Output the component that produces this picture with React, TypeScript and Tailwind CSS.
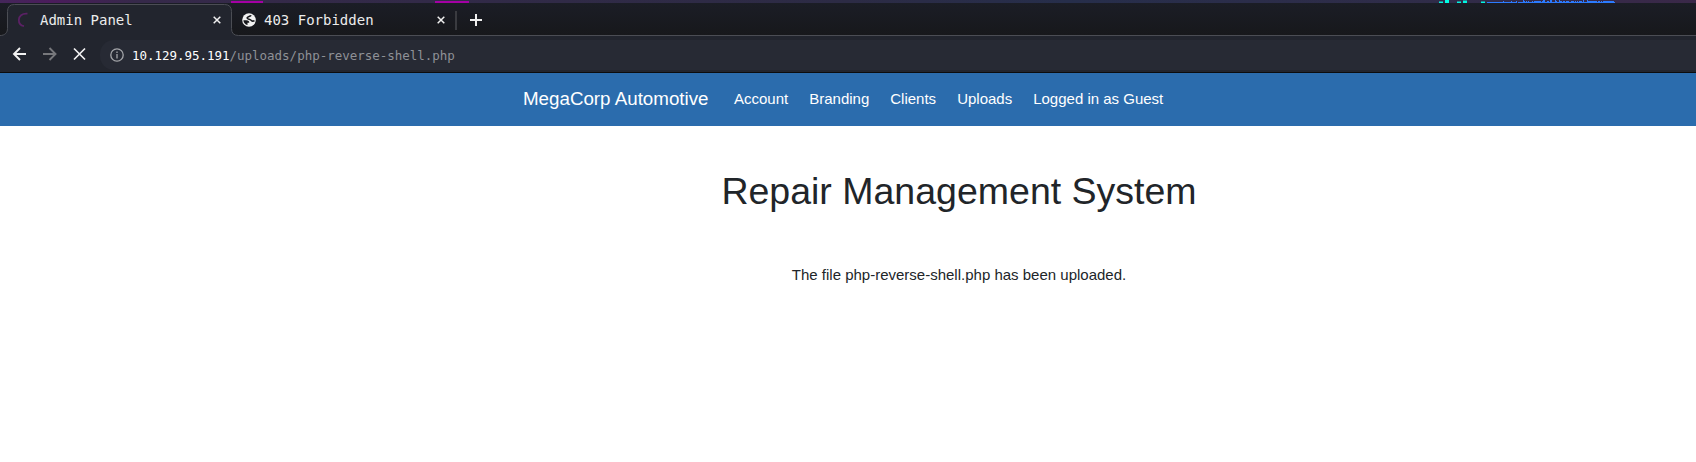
import React from "react";

const cyanMarks = [
  [1439, 1, 4, 1, "#1f8a94"],
  [1439, 2, 4, 1, "#00f5e0"],
  [1445, 0, 4, 3, "#00ffe6"],
  [1457, 1, 4, 1, "#1f8a94"],
  [1457, 2, 4, 1, "#00f5e0"],
  [1463, 0, 4, 1, "#1f8a94"],
  [1463, 1, 4, 2, "#00f5e0"],
  [1481, 1, 4, 1, "#1f8a94"],
  [1481, 2, 4, 1, "#00f5e0"],
] as const;

const blueMarks = [
  [1487, 2, 30], [1503, 1, 1], [1511, 1, 1], [1516, 1, 1],
  [1518, 2, 97], [1523, 0, 1], [1523, 1, 2], [1526, 1, 1], [1528, 1, 1],
  [1532, 1, 1], [1534, 1, 7], [1542, 1, 3], [1543, 0, 2], [1547, 1, 2],
  [1550, 0, 2], [1550, 1, 2], [1555, 0, 1], [1555, 1, 2], [1559, 0, 1],
  [1559, 1, 3], [1563, 1, 2], [1566, 1, 3], [1571, 1, 3], [1575, 1, 1],
  [1577, 1, 1], [1579, 1, 3], [1583, 0, 1], [1583, 1, 1], [1587, 0, 1],
  [1587, 1, 10], [1598, 1, 2], [1601, 1, 1], [1603, 1, 11],
];

function DesktopStrip() {
  return (
    <svg className="block h-[3px] w-full shrink-0" viewBox="0 0 1696 3" preserveAspectRatio="none" shapeRendering="crispEdges">
      <defs>
        <linearGradient id="strip">
          <stop offset="0" stopColor="#44265a" />
          <stop offset="0.03" stopColor="#4b1c5c" />
          <stop offset="0.08" stopColor="#36294a" />
          <stop offset="0.5" stopColor="#2c2b45" />
          <stop offset="0.63" stopColor="#262e4b" />
          <stop offset="0.85" stopColor="#302c49" />
          <stop offset="1" stopColor="#3a2849" />
        </linearGradient>
      </defs>
      <rect width="1696" height="3" fill="url(#strip)" />
      <rect x="231" y="1" width="32" height="2" fill="#a400a4" />
      <rect x="435" y="1" width="34" height="2" fill="#a400a4" />
      {cyanMarks.map(([x, y, w, h, c], i) => (
        <rect key={i} x={x} y={y} width={w} height={h} fill={c} />
      ))}
      {blueMarks.map(([x, y, w], i) => (
        <rect key={i} x={x} y={y} width={w} height={1} fill="#2b7bff" />
      ))}
    </svg>
  );
}

function CloseIcon() {
  return (
    <svg className="mt-px size-2 shrink-0" viewBox="0 0 8 8" fill="none" stroke="#f0f0f0" strokeWidth="1.5">
      <path d="M.7.7 7.3 7.3M7.3.7.7 7.3" />
    </svg>
  );
}

function TabBar() {
  return (
    <div className="relative flex h-[33px] shrink-0 bg-linear-to-b from-[#1b1d26] to-[#17181b] font-['DejaVu_Sans_Mono',monospace] text-[14px] text-[#ececec]">
      <svg className="absolute left-0 top-0 h-[33px] w-full" viewBox="0 0 1696 33" preserveAspectRatio="none">
        <path d="M0 33v-.5c5 0 7.500-3 7.500-7V8.500q0-7 7-7H224.500q7 0 7 7V25.500q0 7 7 7H1696V33Z" fill="#22252e" />
        <path d="M0 32.500c5 0 7.500-3 7.500-7V8.500q0-7 7-7H224.500q7 0 7 7V25.500q0 7 7 7H1696" fill="none" stroke="#4b4d54" />
      </svg>
      <div className="relative flex h-[33px] w-[232px] items-center pl-[17px] pr-[11.5px]">
        <svg className="size-4 shrink-0" viewBox="0 0 16 16" fill="none" stroke="#5b2165" strokeWidth="1.8">
          <path d="M10.500 1.700C5 1.200 1.800 4.200 1.800 8c0 3 2.200 5.600 5.200 6.200" />
        </svg>
        <span className="ml-[7px] mt-px flex-1 whitespace-nowrap">Admin Panel</span>
        <CloseIcon />
      </div>
      <div className="relative flex h-[33px] w-[223px] items-center pl-[10px] pr-[10.5px]">
        <svg className="size-[14px] shrink-0" viewBox="0 0 14 14">
          <circle cx="7" cy="7" r="6.800" fill="#f2f2f2" />
          <path d="M9 2.200C8.600 3.700 5.300 3.300 5.100 4.900 5 6.500 8.400 5.800 9.200 7.300 9.700 8.500 11.500 8.200 12.500 7.600" fill="none" stroke="#17181c" strokeWidth="1.600" />
          <path d="M1.400 7.200H4.400C6.400 7.300 7.400 8.300 7.300 9.800H5.500V12C3.200 11.400 1.400 9.600 1.400 7.200Z" fill="#17181c" />
        </svg>
        <span className="ml-2 mt-px flex-1 whitespace-nowrap">403 Forbidden</span>
        <CloseIcon />
      </div>
      <div className="relative mt-2 h-[19px] w-0.5 bg-[#3a3b40]" />
      <svg className="relative ml-[13px] mt-[11px] size-3" viewBox="0 0 12 12" stroke="#f0f0f0" strokeWidth="2">
        <path d="M6 0v12M0 6h12" />
      </svg>
    </div>
  );
}

function Toolbar() {
  return (
    <div className="flex h-9 shrink-0 bg-[#22252e] pl-3">
      <svg className="mt-[11px] h-[14px] w-[76px] shrink-0" viewBox="0 0 76 14" fill="none" strokeWidth="1.9">
        <path d="M14 7H2M8 1 2 7l6 6" stroke="#f2f2f2" />
        <path d="M31 7h12M37.500 1l6 6-6 6" stroke="#77787c" />
        <path d="m62 1.500 11 11M73 1.500l-11 11" stroke="#f2f2f2" strokeWidth="1.7" />
      </svg>
      <div className="ml-3 mt-1 flex h-[30px] flex-1 items-center rounded-l-[14px] bg-[#272a34] pl-[10px]">
        <svg className="-mt-px size-[14px] shrink-0" viewBox="0 0 14 14" fill="none" stroke="#a5a6aa" strokeWidth="1.300">
          <circle cx="7" cy="7" r="6.200" />
          <path d="M7 6v4.500M7 3.400v1.500" />
        </svg>
        <span className="ml-2 mt-0.5 whitespace-nowrap font-['DejaVu_Sans_Mono',monospace] text-[12.5px] tracking-[-0.02px] text-[#8f9197]">
          <span className="text-white">10.129.95.191</span>/uploads/php-reverse-shell.php
        </span>
      </div>
    </div>
  );
}

const links = ["Account", "Branding", "Clients", "Uploads", "Logged in as Guest"];

export default function App() {
  return (
    <div className="flex h-[462px] w-full flex-col overflow-hidden bg-white font-['Liberation_Sans',Arial,sans-serif] text-[15px] text-[#212529]">
      <DesktopStrip />
      <TabBar />
      <Toolbar />
      <div className="h-px shrink-0 bg-[#0c0c0d]" />
      <nav className="flex h-[53px] shrink-0 items-center bg-[#2b6cad] pl-[523px] text-white">
        <a className="mr-[25.5px] whitespace-nowrap text-[18.75px]">MegaCorp Automotive</a>
        <div className="flex gap-[21px]">
          {links.map((l) => (
            <a key={l} className="whitespace-nowrap">{l}</a>
          ))}
        </div>
      </nav>
      <main className="flex flex-col items-center pl-[222px] pt-[43px]">
        <h1 className="text-[37.5px] leading-[45px]">Repair Management System</h1>
        <p className="mt-[50px] leading-[22px]">The file php-reverse-shell.php has been uploaded.</p>
      </main>
    </div>
  );
}
